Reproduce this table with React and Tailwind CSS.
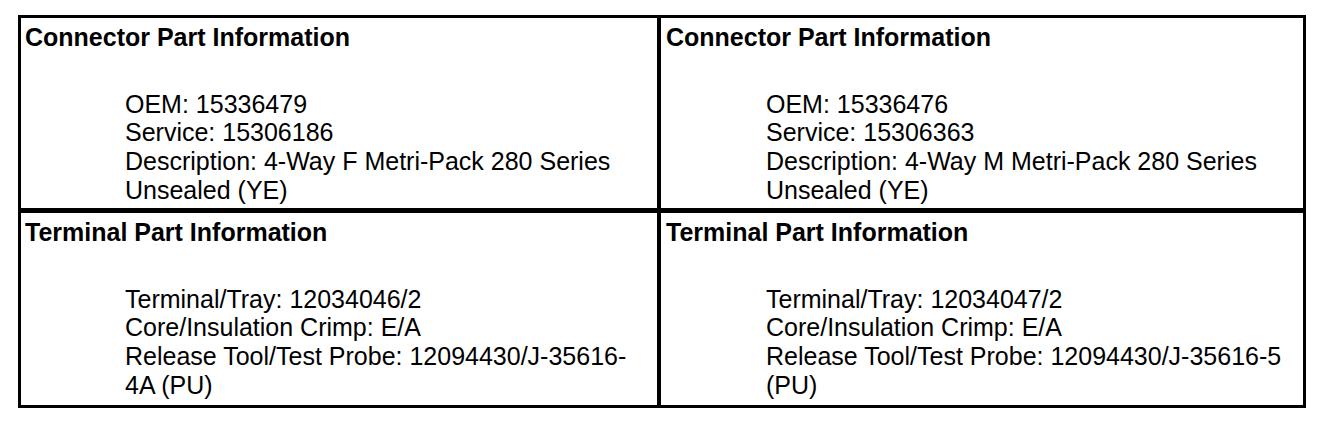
import React from "react";

const cells = [
  {
    title: "Connector Part Information",
    lines: ["OEM: 15336479", "Service: 15306186", "Description: 4-Way F Metri-Pack 280 Series Unsealed (YE)"],
  },
  {
    title: "Connector Part Information",
    lines: ["OEM: 15336476", "Service: 15306363", "Description: 4-Way M Metri-Pack 280 Series Unsealed (YE)"],
  },
  {
    title: "Terminal Part Information",
    lines: ["Terminal/Tray: 12034046/2", "Core/Insulation Crimp: E/A", "Release Tool/Test Probe: 12094430/J-35616-4A (PU)"],
  },
  {
    title: "Terminal Part Information",
    lines: ["Terminal/Tray: 12034047/2", "Core/Insulation Crimp: E/A", "Release Tool/Test Probe: 12094430/J-35616-5 (PU)"],
  },
];

function Cell({ title, lines, className }) {
  return (
    <div className={`pt-[5px] pl-[4px] pr-[6px] ${className}`}>
      <div className="font-bold">{title}</div>
      <div className="mt-[38px] pl-[100px]">
        {lines.map((l, i) => (
          <div key={i}>{l}</div>
        ))}
      </div>
    </div>
  );
}

export default function App() {
  return (
    <div className="w-[1328px] h-[424px] bg-white pt-[15px] pl-[18px] font-['Liberation_Sans',Arial,sans-serif] text-[25px] leading-[28.7px] text-black">
      <div className="w-[1288px] h-[393px] border-[3px] border-black grid grid-cols-[640px_1fr] grid-rows-[195px_192px]">
        <Cell {...cells[0]} className="border-r-[4px] border-b-[5px] border-black" />
        <Cell {...cells[1]} className="border-b-[5px] border-black pl-[5px]" />
        <Cell {...cells[2]} className="border-r-[4px] border-black" />
        <Cell {...cells[3]} className="pl-[5px]" />
      </div>
    </div>
  );
}
